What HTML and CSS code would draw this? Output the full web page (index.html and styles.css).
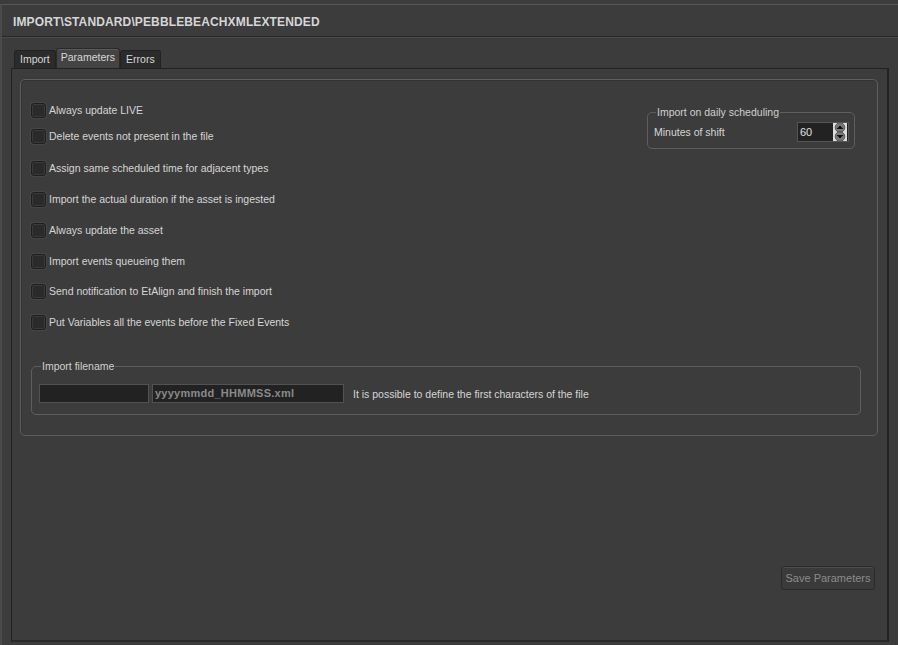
FILE: index.html
```html
<!DOCTYPE html>
<html>
<head>
<meta charset="utf-8">
<link rel="stylesheet" href="styles.css">
</head>
<body>
<div class="window">
  <div class="titlebar">IMPORT\STANDARD\PEBBLEBEACHXMLEXTENDED</div>
  <div class="tabs-area">
    <div class="tabbar">
      <div class="tab">Import</div>
      <div class="tab active">Parameters</div>
      <div class="tab">Errors</div>
    </div>
    <div class="pane">
      <div class="group">
        <div class="top">
          <div class="checks">
            <label class="row"><span class="cb"></span>Always update LIVE</label>
            <label class="row r2"><span class="cb"></span>Delete events not present in the file</label>
            <label class="row r3"><span class="cb"></span>Assign same scheduled time for adjacent types</label>
            <label class="row"><span class="cb"></span>Import the actual duration if the asset is ingested</label>
            <label class="row"><span class="cb"></span>Always update the asset</label>
            <label class="row"><span class="cb"></span>Import events queueing them</label>
            <label class="row r7"><span class="cb"></span>Send notification to EtAlign and finish the import</label>
            <label class="row"><span class="cb"></span>Put Variables all the events before the Fixed Events</label>
          </div>
          <fieldset class="sched">
            <legend>Import on daily scheduling</legend>
            <div class="sched-row">
              <span>Minutes of shift</span>
              <div class="spin">
                <span class="spin-val">60</span>
                <svg class="spin-btns" width="14" height="18" viewBox="0 0 14 18">
                  <rect x="0" y="0" width="14" height="18" fill="#ddd"/>
                  <circle cx="7" cy="4.5" r="4.8" fill="#7a7a7a" stroke="#444" stroke-width="0.8"/>
                  <circle cx="7" cy="13.5" r="4.8" fill="#7a7a7a" stroke="#444" stroke-width="0.8"/>
                  <path d="M3.5 6 L7 2.5 L10.5 6 Z" fill="#111"/>
                  <path d="M3.5 12 L7 15.5 L10.5 12 Z" fill="#111"/>
                </svg>
              </div>
            </div>
          </fieldset>
        </div>
        <fieldset class="fname">
          <legend>Import filename</legend>
          <div class="fname-row">
            <div class="inp prefix"></div>
            <div class="inp pattern">yyyymmdd_HHMMSS.xml</div>
            <span class="hint">It is possible to define the first characters of the file</span>
          </div>
        </fieldset>
      </div>
      <div class="actions">
        <button class="btn" disabled>Save Parameters</button>
      </div>
    </div>
  </div>
</div>
</body>
</html>
```

FILE: styles.css
```css
html, body {
  margin: 0;
  padding: 0;
  background: #3c3c3c;
  width: 898px;
  height: 645px;
  overflow: hidden;
  font-family: "Liberation Sans", Arial, sans-serif;
  font-size: 10.5px;
  color: #d6d6d6;
}

.window {
  margin: 4px 0 0 0;
  height: 641px;
  box-sizing: border-box;
  border-top: 1px solid #565656;
  border-left: 2px solid #4a4a4a;
  display: flex;
  flex-direction: column;
}

.titlebar {
  height: 28px;
  line-height: 28px;
  padding-top: 3px;
  padding-left: 11px;
  font-weight: bold;
  font-size: 12px;
  letter-spacing: 0.13px;
  color: #d6d6d6;
  border-bottom: 1px solid #262626;
  box-shadow: 0 1px 0 #4c4c4c;
}

.tabs-area {
  flex: 1;
  padding: 11px 9px 0 9px;
  display: flex;
  flex-direction: column;
}

.tabbar {
  display: flex;
  align-items: flex-end;
  padding-left: 3px;
  height: 20px;
}

.tab {
  height: 18px;
  line-height: 17px;
  padding: 0 5px;
  background: #2b2b2b;
  border: 1px solid #222;
  border-bottom: none;
  border-radius: 3px 3px 0 0;
  color: #d8d8d8;
  box-sizing: border-box;
}

.tab.active {
  height: 20px;
  line-height: 17px;
  padding: 0 4px;
  background: #444;
  border-color: #2a2a2a;
  box-shadow: inset 0 1px 0 #5a5a5a;
}

.pane {
  flex: 1;
  border: 1px solid #222;
  border-right: 2px solid #222;
  border-bottom: 2px solid #2a2a2a;
  background: #3c3c3c;
  display: flex;
  flex-direction: column;
  padding: 10px 9px 0 8px;
  margin-bottom: 3px;
}

.group {
  border: 1px solid #5e5e5e;
  border-radius: 5px;
  padding: 20px 16px 20px 10px;
  box-shadow: inset 1px 1px 0 #333;
}

.top {
  display: flex;
  justify-content: space-between;
  align-items: flex-start;
}

.checks {
  display: flex;
  flex-direction: column;
  gap: 11px;
}

.row {
  display: flex;
  align-items: center;
  height: 20px;
  white-space: nowrap;
}

.row.r2 { margin-top: -5px; }
.row.r3 { margin-top: 1px; }
.row.r7 { margin-top: -1px; }

.cb {
  width: 13px;
  height: 13px;
  border: 1px solid #1e1e1e;
  background: #2a2a2a;
  border-radius: 3px;
  box-shadow: inset 0 0 0 1px #3a3a3a, 0 0 0 1px #464646;
  margin-right: 3px;
  flex: none;
}

fieldset {
  margin: 0;
  padding: 0;
  border: 1px solid #5e5e5e;
  border-radius: 5px;
}

legend {
  padding: 0 1px;
  margin-left: 2px;
  color: #d0d0d0;
}

.sched {
  width: 208px;
  box-sizing: border-box;
  margin-top: 6px;
  margin-right: 6px;
  padding: 4px 5px 6px 6px;
}

.sched-row {
  display: flex;
  align-items: center;
  justify-content: space-between;
}

.spin {
  width: 52px;
  height: 20px;
  box-sizing: border-box;
  background: #222;
  border: 1px solid #555;
  display: flex;
  align-items: center;
  justify-content: space-between;
  padding: 0 1px 0 2px;
}

.spin-val { color: #e0e0e0; font-size: 11px; }
.spin-btns { display: block; }

.fname {
  margin-top: 28px;
  padding: 12px 7px 11px 7px;
}

.fname-row {
  display: flex;
  align-items: center;
}

.inp {
  height: 19px;
  box-sizing: border-box;
  background: #222;
  border: 1px solid #525252;
  line-height: 17px;
  padding-left: 2px;
}

.prefix { width: 110px; margin-right: 3px; }

.pattern {
  width: 192px;
  color: #8a8a8a;
  font-weight: bold;
  font-size: 11px;
  letter-spacing: 0.25px;
  white-space: nowrap;
  overflow: hidden;
}

.hint { margin-left: 9px; }

.actions {
  margin-top: auto;
  margin-bottom: 50px;
  display: flex;
  justify-content: flex-end;
  padding-right: 3px;
}

.btn {
  font-family: "Liberation Sans", Arial, sans-serif;
  font-size: 11px;
  color: #8c8c8c;
  background: #3a3a3a;
  border: 1px solid #2a2a2a;
  border-radius: 3px;
  box-shadow: inset 0 1px 0 #4e4e4e;
  width: 94px;
  height: 24px;
  padding: 0;
}
```
